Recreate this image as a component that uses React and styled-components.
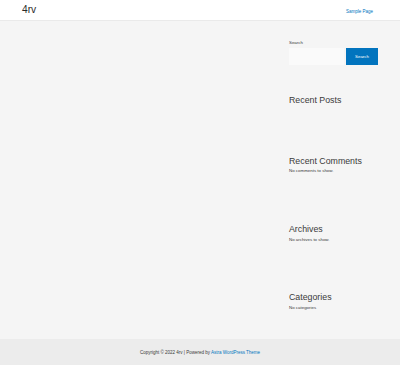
import React from "react";
import styled, { createGlobalStyle } from "styled-components";

const GlobalStyle = createGlobalStyle`
  html, body {
    margin: 0;
    padding: 0;
  }
  body {
    font-family: "Liberation Sans", Arial, sans-serif;
    color: #3a3a3a;
    background: #f5f5f5;
  }
`;

const Page = styled.div`
  min-height: 100vh;
  display: flex;
  flex-direction: column;
`;

const Header = styled.header`
  background: #fff;
  border-bottom: 1px solid #eaeaea;
  height: 20px;
`;

const Container = styled.div`
  padding: 0 22px;
  height: 100%;
  box-sizing: border-box;
`;

const HeaderBar = styled(Container)`
  display: flex;
  align-items: center;
  justify-content: space-between;
`;

const SiteTitle = styled.a`
  font-size: 10.2px;
  line-height: 1;
  color: #2a2a2a;
  text-decoration: none;
  padding-top: 1px;
`;

const NavLink = styled.a`
  font-size: 4.5px;
  color: #0274be;
  text-decoration: none;
  padding: 2px 5px 0 0;
`;

const Main = styled.main`
  flex: 1;
  background: #f5f5f5;
`;

const Layout = styled(Container)`
  display: grid;
  grid-template-columns: 1fr 89px;
  padding-top: 19px;
`;

const Primary = styled.div``;

const Sidebar = styled.aside`
  display: flex;
  flex-direction: column;
`;

const Widget = styled.section`
  margin-bottom: ${(p) => p.$gap}px;
`;

const WidgetTitle = styled.h2`
  margin: 0 0 1.2px;
  font-size: 8.8px;
  line-height: 1.2;
  font-weight: 400;
  color: #3a3a3a;
`;

const WidgetText = styled.p`
  margin: 0;
  font-size: 4.4px;
  line-height: 7px;
  color: #3a3a3a;
`;

const SearchLabel = styled.label`
  display: block;
  font-size: 4.4px;
  line-height: 6.3px;
  margin-bottom: 1.7px;
  color: #3a3a3a;
`;

const SearchRow = styled.div`
  display: flex;
  gap: 2px;
`;

const SearchInput = styled.div`
  width: 55px;
  height: 17px;
  background: #fafafa;
  box-sizing: border-box;
`;

const SearchButton = styled.button`
  width: 32px;
  height: 17px;
  border: 0;
  padding: 0;
  background: #0274be;
  color: #fff;
  font-family: inherit;
  font-size: 4.4px;
`;

const Footer = styled.footer`
  height: 26px;
  background: #ececec;
  display: flex;
  align-items: center;
  justify-content: center;
  font-size: 4.5px;
  color: #3a3a3a;
`;

const FooterLink = styled.a`
  color: #0274be;
  text-decoration: none;
`;

export default function App() {
  return (
    <>
      <GlobalStyle />
      <Page>
        <Header>
          <HeaderBar>
            <SiteTitle href="#">4rv</SiteTitle>
            <NavLink href="#">Sample Page</NavLink>
          </HeaderBar>
        </Header>
        <Main>
          <Layout>
            <Primary />
            <Sidebar>
              <Widget $gap={30.5}>
                <SearchLabel>Search</SearchLabel>
                <SearchRow>
                  <SearchInput />
                  <SearchButton>Search</SearchButton>
                </SearchRow>
              </Widget>
              <Widget $gap={48.5}>
                <WidgetTitle>Recent Posts</WidgetTitle>
              </Widget>
              <Widget $gap={49.5}>
                <WidgetTitle>Recent Comments</WidgetTitle>
                <WidgetText>No comments to show.</WidgetText>
              </Widget>
              <Widget $gap={49.5}>
                <WidgetTitle>Archives</WidgetTitle>
                <WidgetText>No archives to show.</WidgetText>
              </Widget>
              <Widget $gap={0}>
                <WidgetTitle>Categories</WidgetTitle>
                <WidgetText>No categories</WidgetText>
              </Widget>
            </Sidebar>
          </Layout>
        </Main>
        <Footer>
          <span>
            Copyright © 2022 4rv | Powered by{" "}
            <FooterLink href="#">Astra WordPress Theme</FooterLink>
          </span>
        </Footer>
      </Page>
    </>
  );
}
